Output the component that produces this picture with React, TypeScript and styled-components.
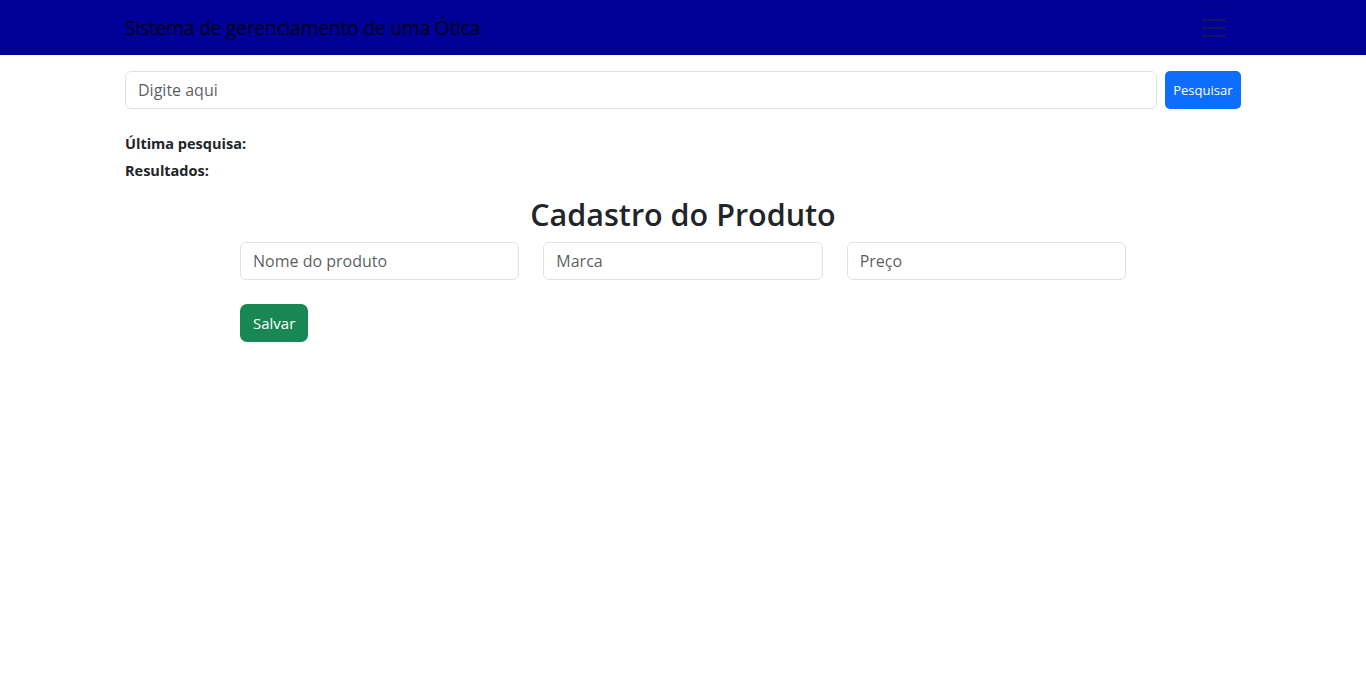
import React from "react";
import styled, { createGlobalStyle } from "styled-components";

const Global = createGlobalStyle`
  html, body { margin: 0; padding: 0; background: #fff; }
  body {
    font-family: "Open Sans", "Noto Sans", "Liberation Sans", sans-serif;
    font-size: 16px;
    line-height: 1.5;
    color: #212529;
  }
  * { box-sizing: border-box; }
`;

const Navbar = styled.nav`
  height: 55px;
  background: #000099;
`;

const Container = styled.div`
  width: 1140px;
  margin: 0 auto;
  padding: 0 12px;
`;

const NavInner = styled(Container)`
  height: 100%;
  display: flex;
  align-items: center;
  justify-content: space-between;
`;

const Brand = styled.a`
  font-size: 19.5px;
  line-height: 30px;
  color: rgba(0, 0, 0, 0.9);
  text-decoration: none;
  letter-spacing: -0.35px;
`;

const Toggler = styled.button`
  width: 54px;
  height: 39px;
  border: 1px solid rgba(0, 0, 0, 0.1);
  border-radius: 6px;
  background: transparent;
  display: flex;
  align-items: center;
  justify-content: center;
  padding: 0;
`;

const SearchForm = styled.form`
  display: flex;
  gap: 8px;
  margin-top: 16px;
`;

const Input = styled.input`
  height: 38px;
  padding: 6px 12px;
  font-family: inherit;
  font-size: 16px;
  color: #212529;
  border: 1px solid #dee2e6;
  border-radius: 6px;
  outline: none;
  width: 100%;
  &::placeholder { color: rgba(33, 37, 41, 0.75); }
`;

const SearchInput = styled(Input)`
  flex: 1;
`;

const Button = styled.button<{ $variant: "primary" | "success"; $small?: boolean }>`
  height: 38px;
  border: none;
  border-radius: ${(p) => (p.$small ? "5px" : "7px")};
  background: ${(p) => (p.$variant === "primary" ? "#0d6efd" : "#198754")};
  color: #fff;
  font-family: inherit;
  font-size: ${(p) => (p.$small ? "13px" : "15px")};
  padding: ${(p) => (p.$small ? "0 8.5px" : "0 13px")};
  cursor: pointer;
`;

const InfoBlock = styled.div`
  margin-top: 23px;
  display: flex;
  flex-direction: column;
  gap: 3px;
`;

const InfoLabel = styled.div`
  font-weight: 700;
  font-size: 14.5px;
  line-height: 24px;
`;

const FormSection = styled.div`
  width: 910px;
  margin: 13px auto 0;
  padding: 0 12px;
`;

const Title = styled.h2`
  margin: 0 0 9px;
  text-align: center;
  font-size: 30.5px;
  font-weight: 600;
  line-height: 1.2;
`;

const FieldRow = styled.div`
  display: grid;
  grid-template-columns: repeat(3, 1fr);
  gap: 24px;
  margin-bottom: 24px;
`;

export default function App() {
  return (
    <>
      <Global />
      <Navbar>
        <NavInner>
          <Brand href="#">Sistema de gerenciamento de uma Ótica</Brand>
          <Toggler type="button" aria-label="menu">
            <svg width="26" height="22" viewBox="0 0 26 22">
              <path d="M1 3h24M1 11h24M1 19h24" stroke="rgba(33,37,41,0.55)" strokeWidth="2" />
            </svg>
          </Toggler>
        </NavInner>
      </Navbar>
      <Container>
        <SearchForm onSubmit={(e) => e.preventDefault()}>
          <SearchInput placeholder="Digite aqui" />
          <Button $variant="primary" $small type="submit">Pesquisar</Button>
        </SearchForm>
        <InfoBlock>
          <InfoLabel>Última pesquisa:</InfoLabel>
          <InfoLabel>Resultados:</InfoLabel>
        </InfoBlock>
      </Container>
      <FormSection>
        <Title>Cadastro do Produto</Title>
        <FieldRow>
          <Input placeholder="Nome do produto" />
          <Input placeholder="Marca" />
          <Input placeholder="Preço" />
        </FieldRow>
        <Button $variant="success" type="button">Salvar</Button>
      </FormSection>
    </>
  );
}
